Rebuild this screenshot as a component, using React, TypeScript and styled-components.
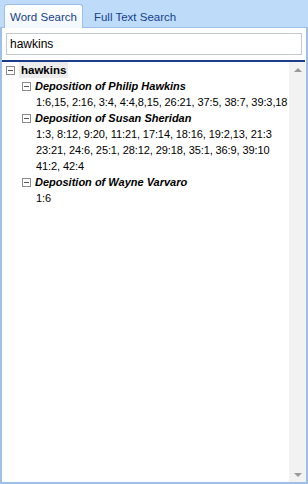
import React from "react"
import styled, { createGlobalStyle } from "styled-components"

const GlobalStyle = createGlobalStyle`
  html, body {
    margin: 0;
    padding: 0;
  }
  body {
    font-family: "Liberation Sans", Arial, sans-serif;
  }
`

const Frame = styled.div`
  width: 308px;
  height: 484px;
  background: #bfdbfa;
  display: flex;
  flex-direction: column;
  box-sizing: border-box;
`

const TabStrip = styled.div`
  height: 27px;
  display: flex;
  align-items: flex-end;
  padding-left: 4px;
  box-sizing: border-box;
`

const Tab = styled.div<{ $active?: boolean }>`
  height: ${(p) => (p.$active ? "24px" : "21px")};
  padding: 0 ${(p) => (p.$active ? "5px" : "6px")};
  margin-right: 4px;
  display: flex;
  align-items: center;
  font-size: 11.5px;
  color: #15428b;
  box-sizing: border-box;
  border: 1px solid ${(p) => (p.$active ? "#9ebfe8" : "transparent")};
  border-bottom: none;
  border-radius: 3px 3px 0 0;
  background: ${(p) => (p.$active ? "linear-gradient(#ffffff, #f3f8ff)" : "transparent")};
  margin-bottom: ${(p) => (p.$active ? "-1px" : "0")};
  position: relative;
`

const Panel = styled.div`
  flex: 1;
  background: #ffffff;
  border: 2px solid #9ebfe8;
  border-top: 1px solid #9ebfe8;
  display: flex;
  flex-direction: column;
  min-height: 0;
`

const SearchRow = styled.div`
  padding: 5px 4px 5px 4px;
`

const SearchInput = styled.input`
  width: 100%;
  height: 22px;
  box-sizing: border-box;
  border: 1px solid #c4c8cf;
  padding: 0 3px;
  font-family: "Liberation Sans", Arial, sans-serif;
  font-size: 12px;
  color: #000;
  outline: none;
`

const Divider = styled.div`
  height: 2px;
  background: #1b3c8a;
  margin-right: 1px;
`

const TreeArea = styled.div`
  flex: 1;
  display: flex;
  min-height: 0;
`

const Tree = styled.div`
  flex: 1;
  padding: 0 0 0 4px;
  font-size: 11px;
  color: #000;
  overflow: hidden;
`

const Row = styled.div<{ $indent: number }>`
  display: flex;
  align-items: center;
  height: 16px;
  padding-left: ${(p) => p.$indent}px;
  white-space: nowrap;
`

const Expander = styled.span`
  width: 9px;
  height: 9px;
  border: 1px solid #8c8c8c;
  box-sizing: border-box;
  position: relative;
  margin-right: 4px;
  flex: none;
  &::after {
    content: "";
    position: absolute;
    left: 1px;
    top: 3px;
    width: 5px;
    height: 1px;
    background: #555;
  }
`

const RootLabel = styled.span`
  font-weight: bold;
  font-size: 11.5px;
  background: #ececec;
  padding: 1px 2px;
  line-height: 14px;
`

const DocLabel = styled.span`
  font-weight: bold;
  font-style: italic;
  font-size: 11px;
`

const Hits = styled.div`
  padding-left: 30px;
  line-height: 16px;
  white-space: nowrap;
  letter-spacing: -0.1px;
`

const Scrollbar = styled.div`
  width: 17px;
  background: #f2f2f2;
  display: flex;
  flex-direction: column;
  justify-content: space-between;
  align-items: center;
  padding: 6px 0 5px;
  box-sizing: border-box;
`

const Arrow = styled.span<{ $down?: boolean }>`
  width: 0;
  height: 0;
  border-left: 4px solid transparent;
  border-right: 4px solid transparent;
  ${(p) => (p.$down ? "border-top: 4px solid #9a9a9a;" : "border-bottom: 4px solid #9a9a9a;")}
`

const docs = [
  {
    title: "Deposition of Philip Hawkins",
    hits: ["1:6,15, 2:16, 3:4, 4:4,8,15, 26:21, 37:5, 38:7, 39:3,18"],
  },
  {
    title: "Deposition of Susan Sheridan",
    hits: [
      "1:3, 8:12, 9:20, 11:21, 17:14, 18:16, 19:2,13, 21:3",
      "23:21, 24:6, 25:1, 28:12, 29:18, 35:1, 36:9, 39:10",
      "41:2, 42:4",
    ],
  },
  {
    title: "Deposition of Wayne Varvaro",
    hits: ["1:6"],
  },
]

const App: React.FC = () => {
  return (
    <Frame>
      <GlobalStyle />
      <TabStrip>
        <Tab $active>Word Search</Tab>
        <Tab>Full Text Search</Tab>
      </TabStrip>
      <Panel>
        <SearchRow>
          <SearchInput defaultValue="hawkins" />
        </SearchRow>
        <Divider />
        <TreeArea>
          <Tree>
            <Row $indent={0}>
              <Expander />
              <RootLabel>hawkins</RootLabel>
            </Row>
            {docs.map((d) => (
              <React.Fragment key={d.title}>
                <Row $indent={16}>
                  <Expander />
                  <DocLabel>{d.title}</DocLabel>
                </Row>
                <Hits>
                  {d.hits.map((h) => (
                    <div key={h}>{h}</div>
                  ))}
                </Hits>
              </React.Fragment>
            ))}
          </Tree>
          <Scrollbar>
            <Arrow />
            <Arrow $down />
          </Scrollbar>
        </TreeArea>
      </Panel>
    </Frame>
  )
}

export default App
